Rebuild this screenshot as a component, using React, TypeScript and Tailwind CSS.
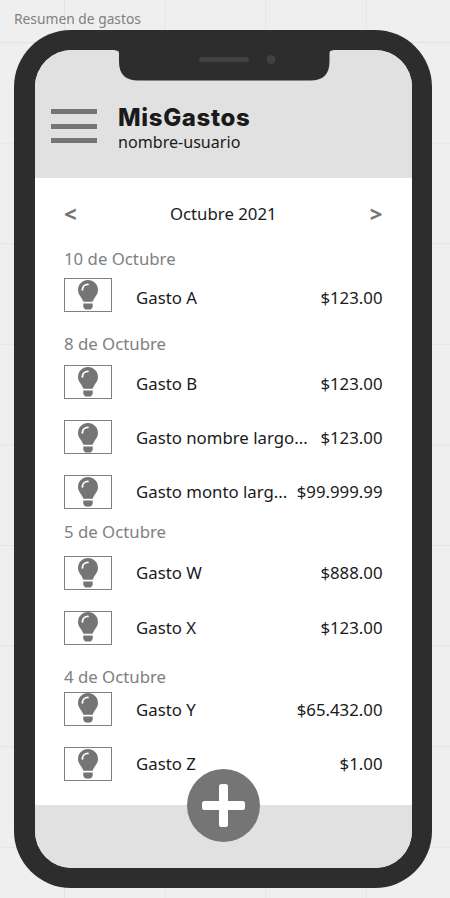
import React from "react";

type Expense = {
  name: string;
  amount: string;
  row: string;
  bulb: string;
  text: string;
};

type Day = { label: string; heading: string; items: Expense[] };

const days: Day[] = [
  {
    label: "10 de Octubre",
    heading: "mt-[21px]",
    items: [
      { name: "Gasto A", amount: "$123.00", row: "mt-[7px]", bulb: "pt-[1.7px]", text: "pt-[6px]" },
    ],
  },
  {
    label: "8 de Octubre",
    heading: "mt-[20px]",
    items: [
      { name: "Gasto B", amount: "$123.00", row: "mt-[9px]", bulb: "pt-[1px]", text: "pt-[4px]" },
      { name: "Gasto nombre largo...", amount: "$123.00", row: "mt-[21px]", bulb: "pt-[2.8px]", text: "pt-[3px]" },
      { name: "Gasto monto larg...", amount: "$99.999.99", row: "mt-[21px]", bulb: "pt-[1.7px]", text: "pt-0" },
    ],
  },
  {
    label: "5 de Octubre",
    heading: "mt-[11.5px]",
    items: [
      { name: "Gasto W", amount: "$888.00", row: "mt-[12px]", bulb: "pt-[1.2px]", text: "pt-0" },
      { name: "Gasto X", amount: "$123.00", row: "mt-[20.5px]", bulb: "pt-[0.7px]", text: "pt-0" },
    ],
  },
  {
    label: "4 de Octubre",
    heading: "mt-[20px]",
    items: [
      { name: "Gasto Y", amount: "$65.432.00", row: "mt-[3px]", bulb: "pt-[0.3px]", text: "pt-[2px]" },
      { name: "Gasto Z", amount: "$1.00", row: "mt-[21px]", bulb: "pt-[1px]", text: "pt-0" },
    ],
  },
];

function Bulb() {
  return (
    <svg width="20" height="30" viewBox="0 0 20 30" className="block shrink-0" fill="#757575">
      <path d="M10 0C4.300 0 0 4.400 0 9.900c0 3.600 2 5.800 3.500 8 1 1.600 1.600 2.800 1.900 3.800h9.200c.3-1 .9-2.200 1.900-3.800 1.500-2.200 3.500-4.400 3.500-8C20 4.400 15.700 0 10 0Z" />
      <path d="M5.300 23.600h9.400v2.800c0 .5-.1.800-.4 1.200l-.8 1.200c-.3.500-.7.700-1.300.700H7.800c-.6 0-1-.2-1.300-.7l-.8-1.200c-.3-.4-.4-.7-.4-1.200Z" />
      <path d="M4.400 9.700c.1-3 2.500-5.300 5.500-5.300" fill="none" stroke="white" strokeWidth="1.900" strokeLinecap="round" />
    </svg>
  );
}

function Row({ item }: { item: Expense }) {
  return (
    <div className={`flex h-[34px] ${item.row}`}>
      <div className={`flex h-[34px] w-12 shrink-0 justify-center border border-[#808080] ${item.bulb}`}>
        <Bulb />
      </div>
      <div className={`ml-6 flex flex-1 items-center justify-between whitespace-nowrap ${item.text}`}>
        <span>{item.name}</span>
        <span>{item.amount}</span>
      </div>
    </div>
  );
}

function Notch() {
  return (
    <svg className="absolute left-[80px] top-0" width="218" height="32" viewBox="0 0 218 32">
      <path d="M0 0H218V.5H217q-2.500 0-2.500 3v8q0 19-19 19H23Q4 30.500 4 11.500V3.500Q4 .5 1 .5H0Z" fill="#2d2d2d" />
      <rect x="84" y="7" width="50" height="5" rx="2.500" fill="#414141" />
      <circle cx="156" cy="9.500" r="4.500" fill="#414141" />
    </svg>
  );
}

export default function App() {
  return (
    <div className="relative h-[898px] w-[450px] overflow-hidden bg-[#efefef] bg-[linear-gradient(to_right,#e4e4e4_1px,transparent_1px),linear-gradient(to_bottom,#e4e4e4_1px,transparent_1px)] bg-size-[100.6px_100.6px] bg-position-[64px_42px] font-['Noto_Sans',sans-serif] text-[16.8px] leading-6 text-[#1a1a1a]">
      <div className="flex h-[30px] items-center pl-[14px] pt-[7px] text-[13.8px] text-[#808080]">
        Resumen de gastos
      </div>
      <div className="ml-[14px] flex h-[858px] w-[418px] flex-col rounded-[57px] bg-[#2d2d2d] py-5 pl-[20.5px] pr-5">
        <div className="relative flex flex-1 flex-col overflow-hidden rounded-[37px] bg-white">
          <Notch />
          <header className="flex h-[127.5px] shrink-0 bg-[#e1e1e1] pl-4 pt-[54px]">
            <div className="flex w-[46px] flex-col gap-[9.5px] pt-[5px]">
              <div className="h-[5px] bg-[#757575]" />
              <div className="h-[5px] bg-[#757575]" />
              <div className="h-[5px] bg-[#757575]" />
            </div>
            <div className="ml-[21.5px]">
              <div className="whitespace-nowrap pt-px font-['Inter',sans-serif] text-[24px] font-extrabold leading-[25px] tracking-[0.65px]">MisGastos</div>
              <div className="text-[16.1px] leading-6">nombre-usuario</div>
            </div>
          </header>
          <main className="flex flex-1 flex-col pl-[29.5px] pr-[29.5px] pt-[24px]">
            <div className="flex h-6 items-center justify-between">
              <span className="pb-0.5 text-[22px] font-extrabold text-[#757575]">&lt;</span>
              <span>Octubre 2021</span>
              <span className="pb-0.5 text-[22px] font-extrabold text-[#757575]">&gt;</span>
            </div>
            {days.map((day) => (
              <section key={day.label}>
                <h2 className={`h-6 text-[#808080] ${day.heading}`}>{day.label}</h2>
                {day.items.map((item) => (
                  <Row key={item.name} item={item} />
                ))}
              </section>
            ))}
          </main>
          <footer className="flex h-[63px] shrink-0 justify-center bg-[#e1e1e1]">
            <button className="relative -mt-[36.5px] flex size-[73px] items-center justify-center rounded-full bg-[#757575]" aria-label="+">
              <svg width="43" height="43" viewBox="0 0 43 43" fill="white">
                <rect x="17" y="0" width="9" height="43" rx="2.500" />
                <rect x="0" y="17" width="43" height="9" rx="2.500" />
              </svg>
            </button>
          </footer>
        </div>
      </div>
    </div>
  );
}
